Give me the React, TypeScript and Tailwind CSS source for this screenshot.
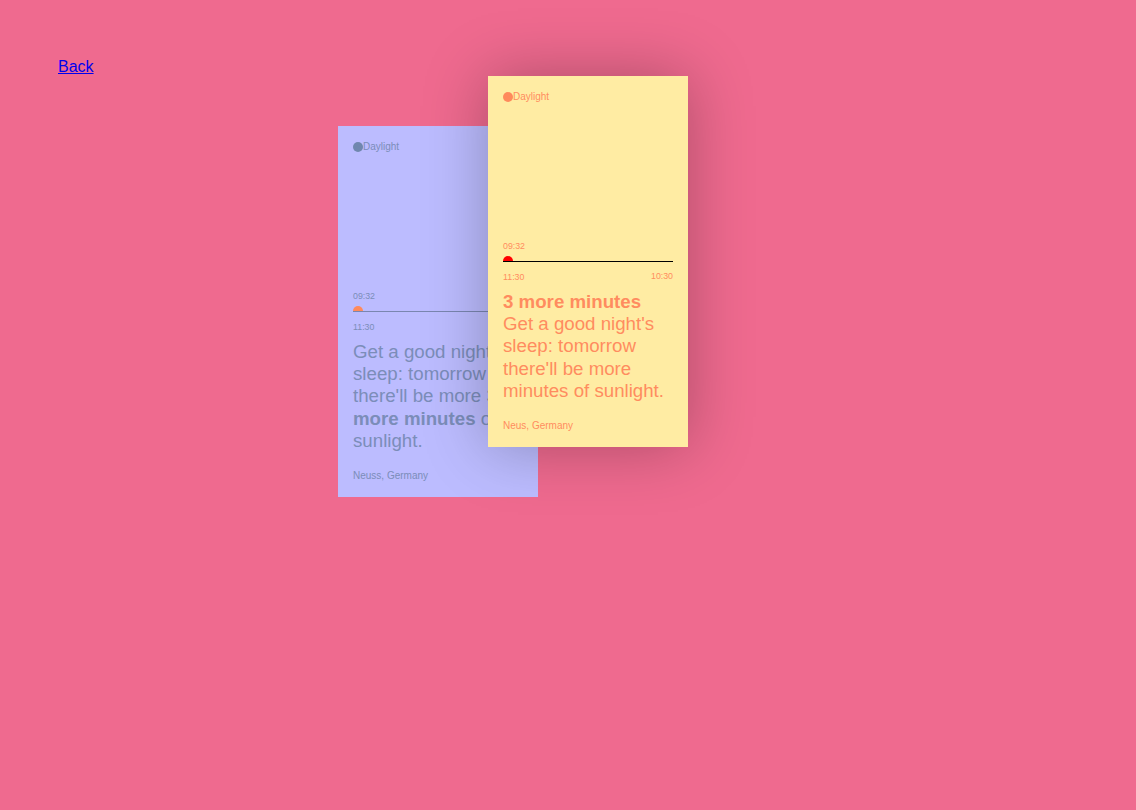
import React from "react";

type Tone = {
  bg: string;
  text: string;
  dot: string;
  knob: string;
  line: string;
};

const blue: Tone = {
  bg: "bg-[#bcbcff]",
  text: "text-[#7b8db9]",
  dot: "bg-[#7087ae]",
  knob: "bg-[#ff8a5c]",
  line: "bg-[#7a86b0]",
};

const yellow: Tone = {
  bg: "bg-[#ffeca3]",
  text: "text-[#ff8c5f]",
  dot: "bg-[#ff8a5c]",
  knob: "bg-[#ff0000]",
  line: "bg-black",
};

function SunCard({ tone, place, body, raised }: { tone: Tone; place: string; body: React.ReactNode; raised?: boolean }) {
  return (
    <div
      className={[
        "w-[200px] h-[371px] p-[15px] flex flex-col shrink-0",
        tone.bg,
        tone.text,
        raised ? "relative z-10 shadow-[0_0_60px_rgba(0,0,0,0.28)]" : "mt-[50px]",
      ].join(" ")}
    >
      <div className="flex items-center text-[10px] leading-[12px]">
        <span className={["w-[10px] h-[10px] rounded-full", tone.dot].join(" ")} />
        <span>Daylight</span>
      </div>

      <div className="mt-auto">
        <div className="text-[8.8px] leading-[12px]">09:32</div>
        <div className="relative h-[18px]">
          <div className={["absolute left-0 right-0 top-[9px] h-px", tone.line].join(" ")} />
          <div className={["absolute left-0 top-[4px] w-[10px] h-[5px] rounded-t-full", tone.knob].join(" ")} />
        </div>
        <div className="flex justify-between text-[8.8px] leading-[12px] pt-px">
          <span>11:30</span>
          {raised && <span className="-mt-px">10:30</span>}
        </div>
        <div className="mt-[8px] text-[18.7px] leading-[22.25px]">{body}</div>
        <div className="mt-[18px] text-[10px] leading-[12px]">{place}</div>
      </div>
    </div>
  );
}

export default function App() {
  return (
    <div className="min-h-screen bg-[#ef6a8f] pt-[58px] font-['Liberation_Sans',Arial,sans-serif]">
      <a href="#" className="block w-fit ml-[58px] text-[16px] leading-[18px] text-[#0000ee] underline">
        Back
      </a>
      <div className="flex items-start pl-[338px]">
        <SunCard
          tone={blue}
          place="Neuss, Germany"
          body={
            <>
              Get a good night's sleep: tomorrow there'll be more 3 <b>more minutes</b> of sunlight.
            </>
          }
        />
        <div className="-ml-[50px]">
          <SunCard
            tone={yellow}
            raised
            place="Neus, Germany"
            body={
              <>
                <b className="block">3 more minutes</b>
                Get a good night's sleep: tomorrow there'll be more minutes of sunlight.
              </>
            }
          />
        </div>
      </div>
    </div>
  );
}
